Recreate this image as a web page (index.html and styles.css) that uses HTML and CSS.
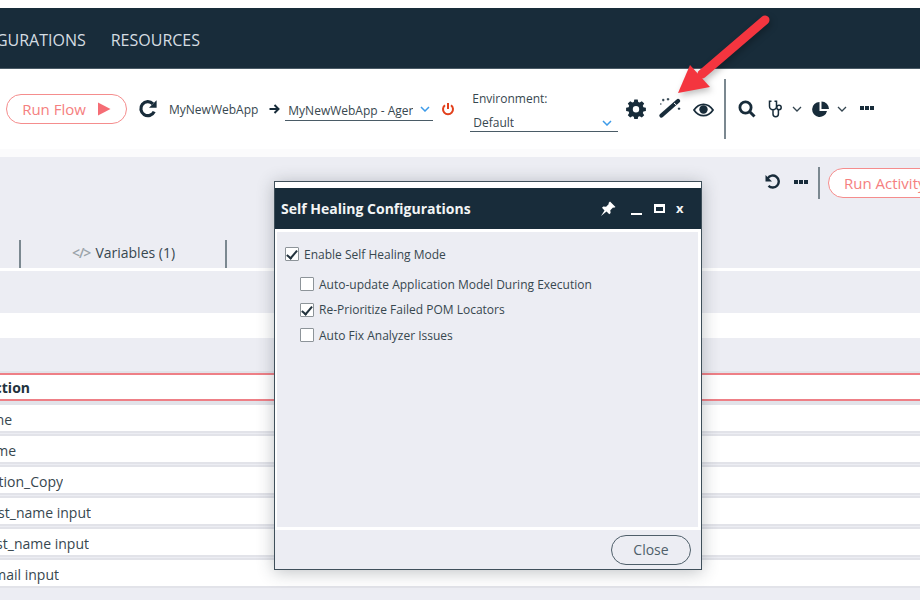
FILE: index.html
```html
<!DOCTYPE html>
<html lang="en">
<head>
    <meta charset="UTF-8">
    <title>Self Healing Configurations</title>
    <link rel="stylesheet" href="styles.css">
</head>
<body>

<nav class="topnav">
    <div class="nav-items">
        <span>CONFIGURATIONS</span>
        <span>RESOURCES</span>
    </div>
</nav>

<header class="toolbar">
    <button class="pill run-flow" type="button">Run Flow
        <svg class="play" width="14" height="14" viewBox="0 0 14 14"><path d="M1 0.500 13.500 7 1 13.500z"/></svg>
    </button>
    <svg class="refresh" width="20" height="20" viewBox="0 0 20 20"><path d="M16.200 12.600a7 7 0 1 1-1.300-7.800" fill="none" stroke="#182c3a" stroke-width="3.200"/><path d="M18.600 1.200v7.600h-7.600z" fill="#182c3a"/></svg>
    <span class="app-name">MyNewWebApp</span>
    <svg class="to-arrow" width="11" height="10" viewBox="0 0 11 10"><path d="M0.500 5h8M5.500 1l4 4-4 4" fill="none" stroke="#182c3a" stroke-width="2"/></svg>
    <div class="select agent-select">
        <span class="select-text">MyNewWebApp - Agent</span>
        <svg class="chevron" width="10" height="6" viewBox="0 0 10 6"><path d="M1 1l4 4 4-4" fill="none" stroke="#3d9be9" stroke-width="1.500"/></svg>
    </div>
    <svg class="power" width="14" height="14" viewBox="0 0 14 14"><path d="M4 3.200a5 5 0 1 0 6 0" fill="none" stroke="#e2401c" stroke-width="2"/><path d="M7 1v6" stroke="#e2401c" stroke-width="2"/></svg>
    <div class="env">
        <label class="env-label">Environment:</label>
        <div class="select env-select">
            <span class="select-text">Default</span>
            <svg class="chevron" width="10" height="6" viewBox="0 0 10 6"><path d="M1 1l4 4 4-4" fill="none" stroke="#3d9be9" stroke-width="1.500"/></svg>
        </div>
    </div>
    <svg class="gear" width="20" height="20" viewBox="0 0 20 20"><path fill-rule="evenodd" fill="#182c3a" d="M8.300 0.500h3.400l.5 2.500 1.500.6 2.100-1.400 2.400 2.400-1.400 2.100.6 1.500 2.500.5v3.400l-2.500.5-.6 1.500 1.400 2.100-2.400 2.400-2.100-1.400-1.500.6-.5 2.500H8.300l-.5-2.500-1.500-.6-2.100 1.400-2.400-2.400 1.400-2.100-.6-1.500-2.500-.5V8.700l2.500-.5.6-1.500-1.400-2.100 2.400-2.400 2.100 1.400 1.500-.6zM10 7a3.200 3.200 0 1 0 0 6.400A3.200 3.200 0 0 0 10 7z"/></svg>
    <svg class="wand" width="22" height="20" viewBox="0 0 22 20"><path d="M2.500 17.500 19 3" stroke="#182c3a" stroke-width="4.200" stroke-linecap="round"/><path d="M15 5 17.500 7.200" stroke="#fff" stroke-width="1"/><path d="M3 2h2.500M4.200 0.800v2.500M9 0v2.500M7.800 1.200h2.500M20 9.500v2.500M18.800 10.700h2.500M1 6h1.500" stroke="#182c3a" stroke-width="1"/></svg>
    <svg class="eye" width="21" height="14" viewBox="0 0 21 14"><path d="M1 7c2.500-3.800 5.700-5.700 9.500-5.700S17.500 3.200 20 7c-2.500 3.800-5.700 5.700-9.500 5.700S3.500 10.800 1 7z" fill="none" stroke="#182c3a" stroke-width="1.800"/><circle cx="10.500" cy="6.500" r="4.200" fill="#182c3a"/></svg>
    <div class="divider tall"></div>
    <svg class="search" width="18" height="18" viewBox="0 0 18 18"><circle cx="7.500" cy="7.500" r="5.600" fill="none" stroke="#182c3a" stroke-width="2.800"/><path d="M11.500 11.500 16.500 16.500" stroke="#182c3a" stroke-width="3"/></svg>
    <svg class="stetho" width="16" height="18" viewBox="0 0 16 18"><path d="M3.500 1.200H1.500v5a3.500 3.500 0 0 0 7 0v-5H6.500M5 9.500V14a2.700 2.700 0 0 0 5.400 0V9.500" fill="none" stroke="#182c3a" stroke-width="1.500"/><circle cx="11" cy="7.500" r="2.200" fill="none" stroke="#182c3a" stroke-width="1.500"/></svg>
    <svg class="caret" width="10" height="6" viewBox="0 0 10 6"><path d="M1 1l4 4 4-4" fill="none" stroke="#33444f" stroke-width="1.300"/></svg>
    <svg class="pie" width="17" height="17" viewBox="0 0 17 17"><path d="M7.500 1a7.500 7.500 0 1 0 7.500 9H7.500z" fill="#182c3a"/><path d="M9.500 0.500V8H17A7.500 7.500 0 0 0 9.500 0.500z" fill="#182c3a"/></svg>
    <svg class="caret" width="10" height="6" viewBox="0 0 10 6"><path d="M1 1l4 4 4-4" fill="none" stroke="#33444f" stroke-width="1.300"/></svg>
    <div class="dots"><i></i><i></i><i></i></div>
</header>

<main class="content">
    <div class="activity-bar">
        <svg class="undo" width="16" height="16" viewBox="0 0 16 16"><path d="M3.500 11.800a6 6 0 1 0-.8-7.500" fill="none" stroke="#182c3a" stroke-width="2.400"/><path d="M0.500 1v6.500H7z" fill="#182c3a"/></svg>
        <div class="dots"><i></i><i></i><i></i></div>
        <div class="divider short"></div>
        <button class="pill run-activity" type="button">Run Activity</button>
    </div>

    <div class="tabs">
        <div class="tab">
            <span class="code-icon">&lt;/&gt;</span> Variables (1)
        </div>
    </div>

    <div class="white-band"></div>

    <div class="rows">
        <div class="row row-active"><span class="cell cell-29">Action</span></div>
        <div class="row"><span class="cell cell-11">Name</span></div>
        <div class="row"><span class="cell cell-15">Name</span></div>
        <div class="row"><span class="cell cell-62">Action_Copy</span></div>
        <div class="row"><span class="cell cell-90">first_name input</span></div>
        <div class="row"><span class="cell cell-88">last_name input</span></div>
        <div class="row"><span class="cell cell-58">email input</span></div>
    </div>
</main>

<section class="modal">
    <div class="modal-title">
        <span class="modal-name">Self Healing Configurations</span>
        <svg class="pin" width="16" height="16" viewBox="0 0 16 16"><path d="M10 0.500 15.500 6l-1.500.8-1-.3-2.700 2.700.3 2.800-1.300 1.300-2.800-2.800L1 15l3.500-5.500L2 6.700l1.300-1.300 2.800.3 2.700-2.700-.3-1z" fill="#fff"/></svg>
        <span class="win-btn win-min"></span>
        <span class="win-btn win-max"></span>
        <span class="win-close">x</span>
    </div>
    <div class="modal-body">
        <label class="check-line main-check"><input type="checkbox" checked> Enable Self Healing Mode</label>
        <div class="sub-checks">
            <label class="check-line"><input type="checkbox"> Auto-update Application Model During Execution</label>
            <label class="check-line"><input type="checkbox" checked> Re-Prioritize Failed POM Locators</label>
            <label class="check-line"><input type="checkbox"> Auto Fix Analyzer Issues</label>
        </div>
    </div>
    <div class="modal-footer">
        <button class="pill close-btn" type="button">Close</button>
    </div>
</section>

<svg class="red-arrow" width="110" height="90" viewBox="0 0 110 90">
    <path d="M97 12 34 66" stroke="#f4353f" stroke-width="9" stroke-linecap="round"/>
    <path d="M10 85 22 57 42 79z" fill="#f4353f"/>
</svg>

</body>
</html>
```

FILE: styles.css
```css
* {
    box-sizing: border-box;
}
html, body {
    margin: 0;
    height: 600px;
    overflow: hidden;
}
body {
    position: relative;
    background-color: #fff;
    padding-top: 8px;
    font-family: "Open Sans", "Noto Sans", sans-serif;
    color: #37474f;
}
button {
    font-family: inherit;
}
svg {
    flex-shrink: 0;
}

.topnav {
    height: 61px;
    background-color: #182c3a;
    border-bottom: 1px solid #4a5b66;
    display: flex;
    align-items: center;
}
.nav-items {
    width: 200px;
    display: flex;
    justify-content: flex-end;
    gap: 25px;
    overflow: hidden;
    white-space: nowrap;
    color: #d5dde2;
    font-size: 16px;
    margin-top: 3px;
    flex-shrink: 0;
}

.toolbar {
    height: 88px;
    border-bottom: 8px solid #fbfbfc;
    display: flex;
    align-items: center;
    padding-left: 6px;
    flex-shrink: 0;
}
.pill {
    background-color: #fff;
    border: 1px solid #f58d8d;
    border-radius: 16px;
    height: 30px;
    color: #f58080;
    font-size: 15px;
    padding: 0;
}
.run-flow {
    width: 121px;
    display: flex;
    align-items: center;
    justify-content: center;
    gap: 11px;
    margin-top: -1px;
}
.play {
    fill: #f56d75;
}
.refresh {
    margin-left: 11px;
}
.app-name {
    margin-left: 11px;
    font-size: 12px;
    white-space: nowrap;
}
.to-arrow {
    margin-left: 11px;
}
.select {
    display: flex;
    align-items: center;
    border-bottom: 1px solid #4a5b66;
    font-size: 12px;
}
.select-text {
    overflow: hidden;
    white-space: nowrap;
}
.agent-select {
    width: 148px;
    height: 20px;
    margin-left: 5px;
    margin-top: 3px;
    padding-left: 3px;
}
.agent-select .select-text {
    width: 125px;
    flex-shrink: 0;
}
.agent-select .chevron {
    margin-left: 7px;
    margin-top: -3px;
}
.power {
    margin-left: 8px;
}
.env {
    width: 148px;
    margin-left: 15px;
    margin-top: 4px;
}
.env-label {
    display: block;
    font-size: 12px;
    padding-left: 2px;
    margin-bottom: 7px;
}
.env-select {
    height: 18px;
    justify-content: space-between;
    padding: 0 6px 0 3px;
    font-size: 12px;
}
.gear {
    margin-left: 8px;
}
.wand {
    margin-left: 13px;
    margin-top: -3px;
}
.eye {
    margin-left: 12px;
    margin-top: 1px;
}
.divider {
    width: 2px;
    background-color: #7b8890;
}
.divider.tall {
    height: 60px;
    margin-left: 10px;
}
.search {
    margin-left: 12px;
}
.stetho {
    margin-left: 12px;
}
.caret {
    margin-left: 8px;
}
.pie {
    margin-left: 10px;
}
.dots {
    display: flex;
    gap: 1px;
    flex-shrink: 0;
}
.dots i {
    width: 4px;
    height: 4px;
    background-color: #182c3a;
}
.toolbar .dots {
    margin-left: 13px;
    margin-top: -2px;
}

.content {
    height: 443px;
    background-color: #ecedf3;
}
.activity-bar {
    height: 83px;
    padding: 10px 0 0 765px;
    display: flex;
    align-items: flex-start;
    white-space: nowrap;
}
.undo {
    margin-top: 7px;
}
.activity-bar .dots {
    margin: 13px 0 0 13px;
}
.divider.short {
    height: 32px;
    margin-left: 10px;
    flex-shrink: 0;
}
.run-activity {
    flex-shrink: 0;
    width: 130px;
    margin-left: 8px;
    margin-top: 1px;
    padding-left: 15px;
    text-align: left;
}
.tabs {
    height: 31px;
    border-bottom: 3px solid #fff;
}
.tab {
    margin-left: 19px;
    width: 208px;
    height: 28px;
    border-left: 2px solid #7b8890;
    border-right: 2px solid #7b8890;
    display: flex;
    align-items: center;
    justify-content: center;
    gap: 5px;
    font-size: 14px;
    padding: 0 0 3px 1px;
}
.code-icon {
    color: #9aa3a9;
    font-weight: 600;
    letter-spacing: -1px;
}
.white-band {
    height: 25px;
    margin-top: 42px;
    background-color: #fff;
}
.rows {
    margin-top: 35px;
}
.row {
    height: 26px;
    margin-bottom: 5px;
    background-color: #fff;
    box-shadow: 0 -2px 0 #e2e3e9, 0 2px 0 #e2e3e9;
    display: flex;
    align-items: center;
    font-size: 14px;
    padding-top: 2px;
}
.row-active {
    height: 28px;
    margin-bottom: 4px;
    padding-top: 0;
    border-top: 2px solid #ee7f86;
    border-bottom: 2px solid #ee7f86;
    font-weight: 700;
    color: #22323d;
}
.cell {
    display: flex;
    justify-content: flex-end;
    overflow: hidden;
    white-space: nowrap;
}
.cell-29 { width: 30px; }
.cell-11 { width: 12px; }
.cell-15 { width: 16px; }
.cell-62 { width: 63px; }
.cell-90 { width: 91px; }
.cell-88 { width: 89px; }
.cell-58 { width: 59px; }

.modal {
    position: absolute;
    left: 274px;
    top: 181px;
    width: 428px;
    height: 389px;
    border: 1px solid #3f4f5a;
    padding-top: 6px;
    background-color: #fff;
    box-shadow: 0 2px 16px rgba(40, 50, 60, 0.3);
    display: flex;
    flex-direction: column;
}
.modal-title {
    height: 41px;
    flex-shrink: 0;
    background-color: #182c3a;
    color: #f2f4f5;
    display: flex;
    align-items: center;
    padding-left: 6px;
}
.modal-name {
    font-size: 14px;
    font-weight: 700;
    width: 319px;
    white-space: nowrap;
}
.win-btn {
    display: block;
}
.win-min {
    width: 11px;
    height: 2px;
    background-color: #fff;
    margin-left: 15px;
    margin-top: 10px;
}
.win-max {
    width: 11px;
    height: 9px;
    border: 2px solid #fff;
    border-top-width: 3px;
    margin-left: 12px;
    margin-top: -1px;
}
.win-close {
    font-size: 13px;
    font-weight: 700;
    margin-left: 11px;
    margin-top: -2px;
}
.modal-body {
    flex: 1;
    background-color: #ecedf3;
    border: 2px solid #fff;
    border-width: 3px 3px 3px 2px;
    padding: 13px 0 0 8px;
    font-size: 12px;
}
.check-line {
    display: flex;
    align-items: center;
    gap: 5px;
    height: 18px;
    white-space: nowrap;
}
.check-line input {
    appearance: none;
    width: 14px;
    height: 14px;
    margin: 0;
    background-color: #fff;
    border: 1px solid #8d9499;
    border-radius: 1px;
    position: relative;
    flex-shrink: 0;
}
.check-line input:checked::after {
    content: "";
    position: absolute;
    left: 3px;
    top: 0;
    width: 4px;
    height: 9px;
    border: solid #22323d;
    border-width: 0 2px 2px 0;
    transform: rotate(40deg);
}
.main-check {
    margin-bottom: 12px;
}
.sub-checks {
    padding-left: 15px;
    display: flex;
    flex-direction: column;
    gap: 7.5px;
}
.modal-footer {
    height: 39px;
    flex-shrink: 0;
    background-color: #ecedf3;
    display: flex;
    justify-content: flex-end;
    align-items: center;
    padding-right: 10px;
}
.close-btn {
    width: 80px;
    height: 30px;
    background-color: transparent;
    border-color: #4f5f6a;
    color: #4f5f6a;
    font-size: 14px;
}

.red-arrow {
    position: absolute;
    left: 668px;
    top: 8px;
    filter: drop-shadow(2px 3px 3px rgba(0, 0, 0, 0.25));
}
```
